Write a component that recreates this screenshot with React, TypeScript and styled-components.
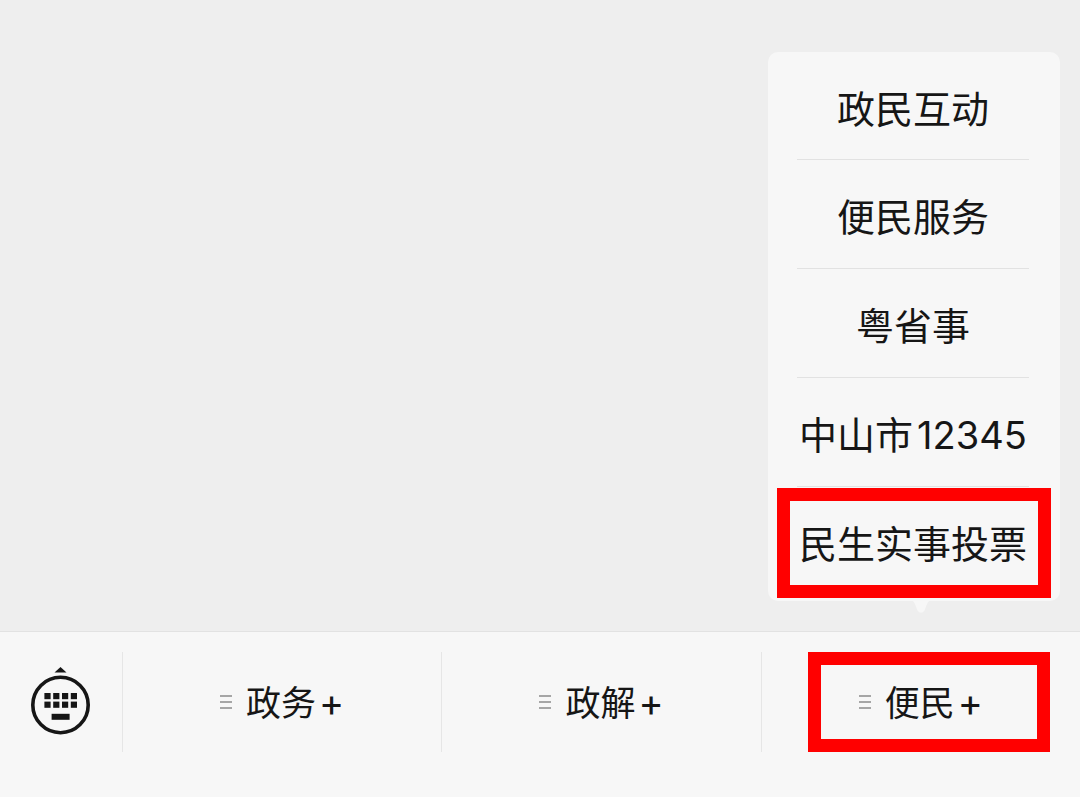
import React from "react";
import styled, { createGlobalStyle } from "styled-components";

const GlobalStyle = createGlobalStyle`
  *, *::before, *::after { box-sizing: border-box; }
  body {
    margin: 0;
    background: #eeeeee;
    color: #161616;
    font-family: Inter, "Noto Sans CJK SC", sans-serif;
  }
  button {
    margin: 0;
    padding: 0;
    border: 0;
    background: none;
    color: inherit;
    font: inherit;
    cursor: pointer;
  }
`;

const Page = styled.div`
  display: flex;
  flex-direction: column;
  min-height: 100vh;
`;

const Conversation = styled.main`
  flex: 1;
`;

const MenuBar = styled.nav`
  display: flex;
  padding: 20px 0 45px;
  border-top: 1px solid #e2e2e2;
  background: #f7f7f7;
`;

const KeyboardButton = styled.button`
  display: flex;
  flex: 0 0 122px;
  align-items: center;
  justify-content: center;
`;

const MenuCell = styled.div`
  position: relative;
  flex: 1;
  height: 100px;
  border-left: 1px solid #e6e6e6;
`;

const MenuButton = styled.button`
  display: flex;
  width: 100%;
  height: 100%;
  align-items: center;
  justify-content: center;
  gap: 14px;
  font-size: 35px;
  line-height: 48px;
`;

const Plus = styled.span`
  margin-left: 3px;
  font-size: 38px;
  line-height: 48px;
`;

const Popup = styled.ul`
  position: absolute;
  right: 20px;
  bottom: calc(100% + 51px);
  width: 292px;
  margin: 0;
  padding: 0 0 6px;
  border-radius: 10px;
  background: #f7f7f7;
  list-style: none;
`;

const PopupItem = styled.li`
  position: relative;
  height: 109px;
  padding: 0 31px 0 29px;

  &:first-child { height: 108px; }
  &:last-child { height: 108px; }
`;

const PopupButton = styled.button<{ $divided: boolean }>`
  width: 100%;
  height: 100%;
  padding-top: 6px;
  border-bottom: ${(p) => (p.$divided ? "1px solid #e2e2e2" : "0")};
  font-size: 38px;
  line-height: 52px;
  white-space: nowrap;
`;

const Digits = styled.span`
  margin-left: 4px;
`;

const PopupTail = styled.svg`
  position: absolute;
  left: 50%;
  bottom: calc(100% + 39px);
  margin-left: -8px;
`;

const Highlight = styled.span<{ $inset: string }>`
  position: absolute;
  inset: ${(p) => p.$inset};
  border: 13px solid #ff0000;
  pointer-events: none;
`;

const KeyboardIcon = () => (
  <svg width="60" height="70" viewBox="0 0 60 70" fill="#161616" aria-hidden="true">
    <path d="M29.5 0 35.500 5.500H23.500z" />
    <circle cx="29.5" cy="38" r="27.7" fill="none" stroke="#161616" strokeWidth="3.6" />
    {[26, 34.6].map((y) =>
      [13.4, 22.2, 31, 39.8].map((x) => (
        <rect key={`${x}-${y}`} x={x} y={y} width="6.2" height="6.2" />
      ))
    )}
    <rect x="20.6" y="46.8" width="18" height="6" />
  </svg>
);

const LinesIcon = () => (
  <svg width="12" height="16" viewBox="0 0 12 16" stroke="#8c8c8c" strokeWidth="1.5" aria-hidden="true">
    <path d="M0 2H12M0 8H12M0 14H12" />
  </svg>
);

const MenuLabel = ({ text }: { text: string }) => (
  <>
    <LinesIcon />
    <span>
      {text}
      <Plus>+</Plus>
    </span>
  </>
);

const services = [
  { name: "政民互动" },
  { name: "便民服务" },
  { name: "粤省事" },
  { name: "中山市", digits: "12345" },
  { name: "民生实事投票" },
];

export default function App() {
  return (
    <>
      <GlobalStyle />
      <Page>
        <Conversation />
        <MenuBar>
          <KeyboardButton type="button" aria-label="键盘">
            <KeyboardIcon />
          </KeyboardButton>
          {["政务", "政解"].map((text) => (
            <MenuCell key={text}>
              <MenuButton type="button">
                <MenuLabel text={text} />
              </MenuButton>
            </MenuCell>
          ))}
          <MenuCell>
            <MenuButton type="button" aria-expanded="true">
              <MenuLabel text="便民" />
            </MenuButton>
            <Highlight $inset="0 30px 0 46px" />
            <PopupTail width="16" height="12" viewBox="0 0 16 12" fill="#f7f7f7" aria-hidden="true">
              <path d="M0 0H16C14 2 13 6 11.500 9.500Q8 14 4.500 9.500C3 6 2 2 0 0Z" />
            </PopupTail>
            <Popup>
              {services.map(({ name, digits }, i) => {
                const last = i === services.length - 1;
                return (
                  <PopupItem key={name}>
                    <PopupButton type="button" $divided={!last}>
                      {name}
                      {digits && <Digits>{digits}</Digits>}
                    </PopupButton>
                    {last && <Highlight $inset="1px 9px -3px 9px" />}
                  </PopupItem>
                );
              })}
            </Popup>
          </MenuCell>
        </MenuBar>
      </Page>
    </>
  );
}
